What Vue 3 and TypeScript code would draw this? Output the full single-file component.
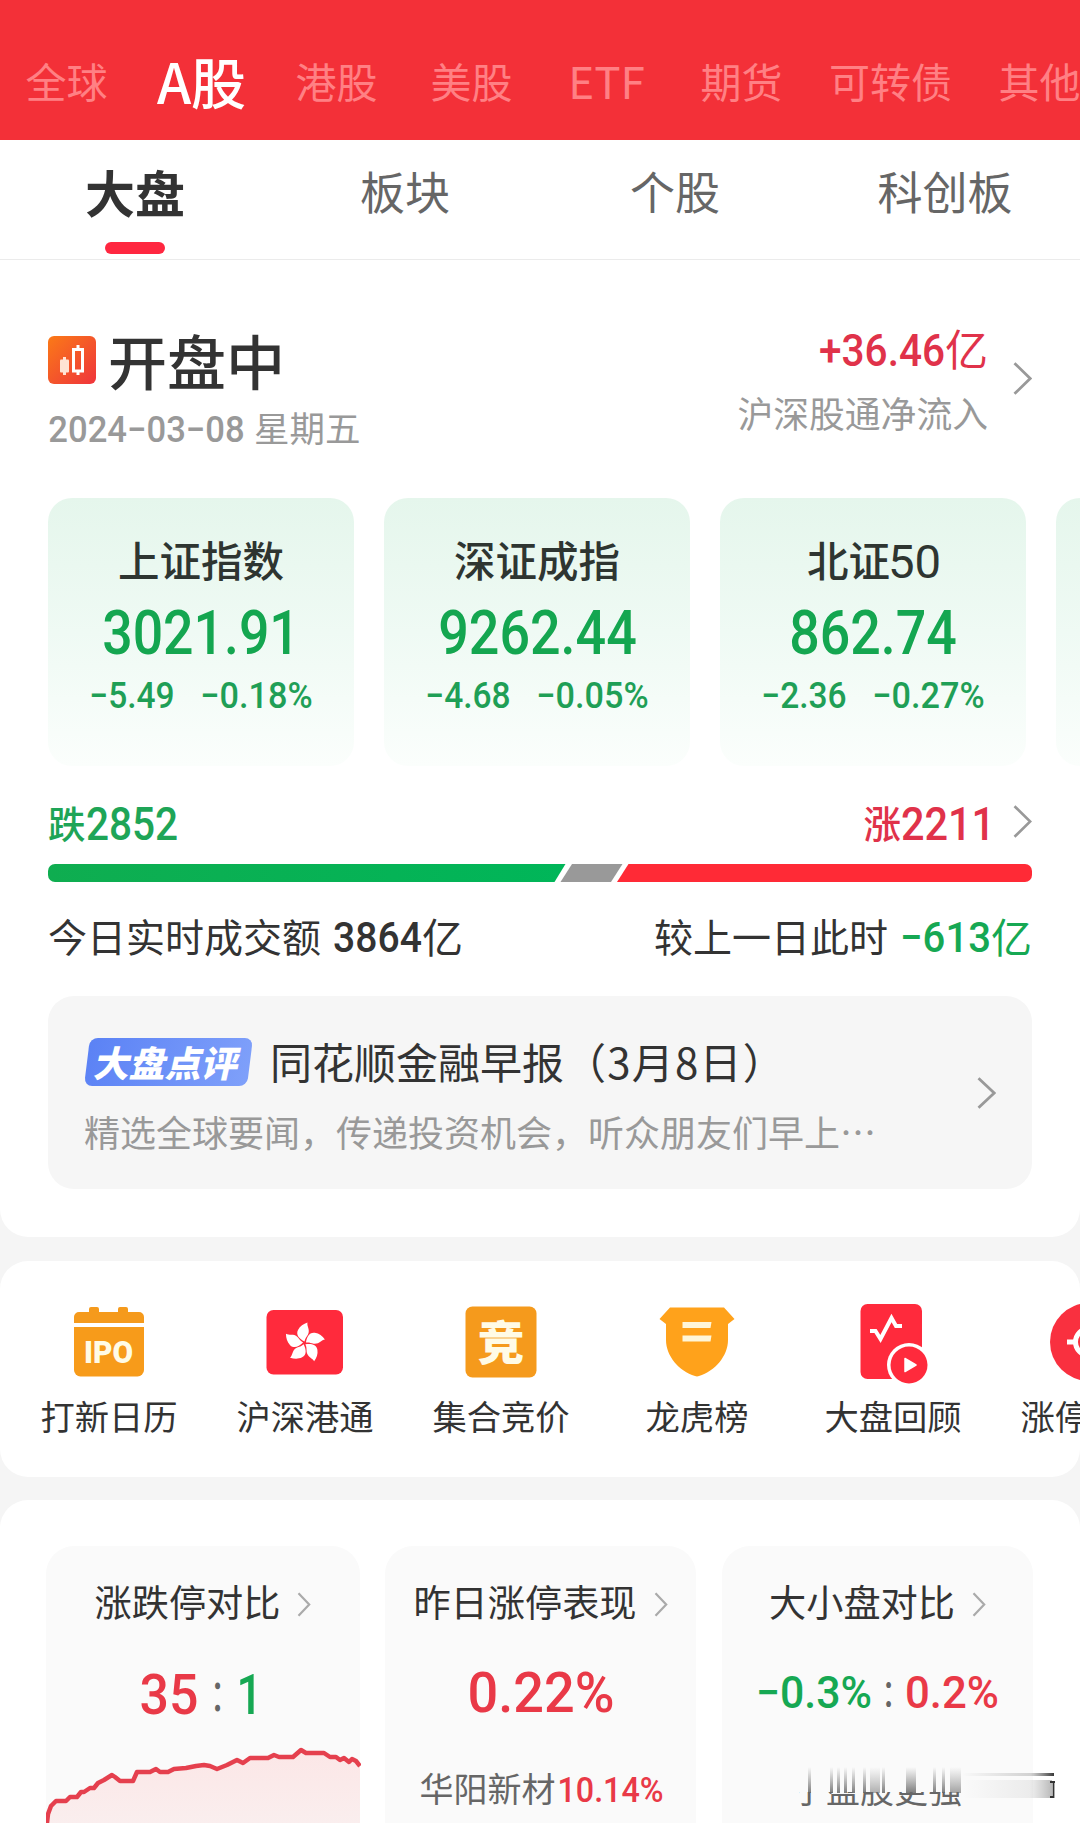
<script setup lang="ts">
import { h, type FunctionalComponent } from 'vue'

interface NumProps {
  t: string
  w: number
  cap: number
  weight?: number
}

/** Condensed figures: a text run fitted to a given width and cap height. */
const Num: FunctionalComponent<NumProps> = (p) => {
  const size = p.cap / 0.711
  const bearing = size * 0.045
  return h(
    'svg',
    {
      width: p.w,
      height: p.cap,
      viewBox: `0 0 ${p.w} ${p.cap}`,
      style: { overflow: 'visible', display: 'block', flex: 'none' },
    },
    [
      h(
        'text',
        {
          x: -bearing,
          y: p.cap,
          textLength: p.w + bearing * 2,
          lengthAdjust: 'spacingAndGlyphs',
          fill: 'currentColor',
          'font-family': 'Roboto, "Liberation Sans", sans-serif',
          'font-size': size,
          'font-weight': p.weight ?? 500,
        },
        p.t,
      ),
    ],
  )
}
Num.props = ['t', 'w', 'cap', 'weight']

const Chevron: FunctionalComponent<{ w: number; hgt: number; sw: number }> = (p) =>
  h('svg', { width: p.w, height: p.hgt, style: { display: 'block', flex: 'none' } }, [
    h('path', {
      d: `M1.5 1.2 L${p.w - 1.8} ${p.hgt / 2} L1.5 ${p.hgt - 1.2}`,
      fill: 'none',
      stroke: 'currentColor',
      'stroke-width': p.sw,
    }),
  ])
Chevron.props = ['w', 'hgt', 'sw']

const markets = ['全球', 'A股', '港股', '美股', 'ETF', '期货', '可转债', '其他']
const boards = ['大盘', '板块', '个股', '科创板']

const indexes = [
  { name: '上证指数', digits: '', value: '3021.91', vw: 192, diff: '−5.49', pct: '−0.18%' },
  { name: '深证成指', digits: '', value: '9262.44', vw: 193, diff: '−4.68', pct: '−0.05%' },
  { name: '北证', digits: '50', value: '862.74', vw: 162, diff: '−2.36', pct: '−0.27%' },
]

const shortcuts = [
  { label: '打新日历', icon: 'ipo' },
  { label: '沪深港通', icon: 'hk' },
  { label: '集合竞价', icon: 'auction' },
  { label: '龙虎榜', icon: 'shield' },
  { label: '大盘回顾', icon: 'review' },
  { label: '涨停聚焦', icon: 'target' },
]

const petals = [0, 72, 144, 216, 288]

const trend =
  '1,277 2,268 5,260 10,255 20,255 24,251 31,251 35,246 38,246 44,242 48,242 52,237 58,234 66,229 69,231 74,235 87,235 91,226 104,226 110,223 114,226 122,226 128,223 140,222 150,220 158,219 164,220 171,223 181,219 191,214 197,217 204,212 222,212 228,209 233,211 247,211 255,204 260,207 278,207 284,211 290,211 294,214 298,212 303,216 306,213 310,215 314,220'
</script>

<template>
  <div class="page">
    <header class="markets">
      <span
        v-for="(m, i) in markets"
        :key="m"
        class="market"
        :class="{ active: i === 1, latin: m === 'ETF', wide: m.length === 3 && i > 4 }"
      >{{ m }}</span>
    </header>

    <nav class="boards">
      <div v-for="(b, i) in boards" :key="b" class="board" :class="{ active: i === 0 }">
        <span>{{ b }}</span>
        <i v-if="i === 0"></i>
      </div>
    </nav>

    <section class="overview">
      <div class="status">
        <div class="status-left">
          <div class="status-title">
            <svg class="kicon" width="48" height="48" viewBox="0 0 48 48">
              <defs>
                <linearGradient id="kg" x1="0" y1="0" x2="1" y2="1">
                  <stop offset="0" stop-color="#fb7a17" />
                  <stop offset="0.5" stop-color="#f4572a" />
                  <stop offset="1" stop-color="#f0343c" />
                </linearGradient>
              </defs>
              <rect width="48" height="48" rx="6" fill="url(#kg)" />
              <g fill="#ffe3d4">
                <rect x="12" y="23.500" width="9" height="13" rx="1" />
                <rect x="15" y="21" width="3" height="18" />
              </g>
              <rect x="25.500" y="13.500" width="9" height="21.500" fill="none" stroke="#fff" stroke-width="3" />
              <rect x="28.500" y="9" width="3" height="5" fill="#fff" />
              <rect x="28.500" y="35" width="3" height="4" fill="#fff" />
            </svg>
            <h1>开盘中</h1>
          </div>
          <div class="date">
            <Num class="date-num" t="2024−03−08" :w="193" :cap="26" :weight="500" />
            <span>星期五</span>
          </div>
        </div>
        <div class="flow">
          <div class="flow-value">
            <Num class="flow-num" t="+36.46" :w="122" :cap="32" />
            <span>亿</span>
          </div>
          <span class="flow-label">沪深股通净流入</span>
        </div>
        <Chevron class="grey-arrow" :w="19" :hgt="33" :sw="2.8" />
      </div>

      <div class="indexes">
        <article v-for="x in indexes" :key="x.value" class="index">
          <div class="index-name">
            <span>{{ x.name }}</span>
            <Num v-if="x.digits" class="index-digits" :t="x.digits" :w="49" :cap="33" :weight="450" />
          </div>
          <Num class="index-value" :t="x.value" :w="x.vw" :cap="44" />
          <div class="index-change">
            <Num :t="x.diff" :w="82" :cap="26" />
            <Num :t="x.pct" :w="109" :cap="26" />
          </div>
        </article>
        <article class="index"></article>
      </div>

      <div class="breadth">
        <div class="down"><span>跌</span><Num class="bn" t="2852" :w="88" :cap="33" /></div>
        <div class="up">
          <span>涨</span><Num class="bn" t="2211" :w="90" :cap="33" />
          <Chevron class="up-arrow" :w="19" :hgt="33" :sw="2.6" />
        </div>
      </div>
      <svg class="bar" width="984" height="18" viewBox="0 0 984 18">
        <defs>
          <linearGradient id="gb" x1="0" x2="1" y1="0" y2="0">
            <stop offset="0" stop-color="#0fad50" />
            <stop offset="1" stop-color="#00b659" />
          </linearGradient>
        </defs>
        <path d="M7 0 H517.5 L506.5 18 H7 A7 7 0 0 1 0 11 V7 A7 7 0 0 1 7 0Z" fill="url(#gb)" />
        <path d="M524 0 H574.5 L563 18 H512.5Z" fill="#999" />
        <path d="M580.5 0 H977 A7 7 0 0 1 984 7 V11 A7 7 0 0 1 977 18 H569Z" fill="#ff2a36" />
      </svg>
      <div class="turnover">
        <div class="pair">
          <span>今日实时成交额</span>
          <Num class="tn" t="3864" :w="85" :cap="30.5" />
          <em>亿</em>
        </div>
        <div class="pair">
          <span>较上一日此时</span>
          <Num class="tn green" t="−613" :w="87" :cap="30.5" />
          <em class="green">亿</em>
        </div>
      </div>

      <div class="comment">
        <div class="comment-body">
          <div class="comment-head">
            <span class="tag"><b>大盘点评</b></span>
            <span class="comment-title">同花顺金融早报<span class="day">（3月8日）</span></span>
          </div>
          <p>精选全球要闻，传递投资机会，听众朋友们早上…</p>
        </div>
        <Chevron class="comment-arrow" :w="19" :hgt="32" :sw="2.8" />
      </div>
    </section>

    <section class="shortcuts">
      <div v-for="s in shortcuts" :key="s.label" class="shortcut">
        <svg width="84" height="84" viewBox="0 0 84 84">
          <g v-if="s.icon === 'ipo'">
            <path d="M7 23 V17 a5 5 0 0 1 5-5 H22 V9 a2 2 0 0 1 2-2 h6 a2 2 0 0 1 2 2 V12 H51 V9 a2 2 0 0 1 2-2 h6 a2 2 0 0 1 2 2 V12 H72 a5 5 0 0 1 5 5 V23Z" fill="#f59a1c" />
            <path d="M7 27 H77 V70 a6.5 6.5 0 0 1 -6.5 6.5 H13.5 A6.5 6.5 0 0 1 7 70Z" fill="#f79b1a" />
            <text x="17" y="63" textLength="49" lengthAdjust="spacingAndGlyphs" font-family="Roboto, sans-serif" font-weight="900" font-size="32" fill="#fffbe6">IPO</text>
          </g>
          <g v-else-if="s.icon === 'hk'">
            <rect x="3.500" y="10" width="76.500" height="64.500" rx="7" fill="#ff2a3c" />
            <g transform="translate(41.500 43)">
              <path v-for="a in petals" :key="a" :transform="`rotate(${a})`" d="M0 -1.5 C-5 -4 -9 -8 -6.5 -13 C-4.5 -17 -1 -19 3 -20.500 C2 -17 6 -13.500 3.500 -8.500 C2 -6 .5 -4.500 0 -1.5Z" fill="#fff" />
            </g>
          </g>
          <g v-else-if="s.icon === 'auction'">
            <rect x="6.500" y="6.500" width="71" height="71" rx="7" fill="#f59a1c" />
            <text x="42" y="60" text-anchor="middle" font-family="Noto Sans CJK SC, sans-serif" font-weight="900" font-size="47" fill="#fffbe6">竞</text>
          </g>
          <g v-else-if="s.icon === 'shield'">
            <path d="M15 7.5 H69 L79.500 19 L73 24 V40 C73 56 60 71 44 76 Q42 76.8 40 76 C24 71 11 56 11 40 V24 L4.500 19Z" fill="#ffa21b" />
            <path d="M27.500 22 H56.500 L55.500 28 H27.500Z M27.500 35.500 H56.500 L55.500 41.500 H27.500Z" fill="#fff6d8" />
          </g>
          <g v-else-if="s.icon === 'review'">
            <rect x="9.500" y="4" width="61.500" height="75" rx="7" fill="#ff2a3c" />
            <circle cx="58" cy="65" r="22" fill="#fff" />
            <circle cx="58" cy="65" r="18.500" fill="#ff2a3c" />
            <path d="M54 58.500 L65 65 L54 71.500Z" fill="#fff" stroke="#fff" stroke-width="1.500" stroke-linejoin="round" />
            <path d="M19 31 H24.500 L29.500 39 L40.500 18 L45 26 H51" fill="none" stroke="#fff" stroke-width="4" />
          </g>
          <g v-else>
            <circle cx="42" cy="42" r="39" fill="#f9303f" />
            <circle cx="42" cy="42" r="13.500" fill="none" stroke="#fff" stroke-width="5" />
            <path d="M20 42 H30 M54 42 H64 M42 20 V30 M42 54 V64" stroke="#fff" stroke-width="5" />
          </g>
        </svg>
        <span>{{ s.label }}</span>
      </div>
    </section>

    <section class="stats">
      <article class="stat lead">
        <div class="stat-head"><span>涨跌停对比</span><Chevron class="sa" :w="14" :hgt="25" :sw="2.2" /></div>
        <div class="stat-value first">
          <Num class="red" t="35" :w="54" :cap="39" />
          <Num class="colon" t=":" :w="5" :cap="37" />
          <Num class="green" t="1" :w="21" :cap="39" />
        </div>
        <svg class="trend" width="315" height="277" viewBox="0 0 315 277">
          <defs>
            <linearGradient id="tg" x1="0" y1="200" x2="0" y2="277" gradientUnits="userSpaceOnUse">
              <stop offset="0" stop-color="#fce6e6" />
              <stop offset="1" stop-color="#faeeee" />
            </linearGradient>
          </defs>
          <polygon :points="`${trend} 314,277`" fill="url(#tg)" />
          <polyline :points="trend" fill="none" stroke="#e5404e" stroke-width="4.500" stroke-linejoin="round" />
        </svg>
      </article>
      <article class="stat">
        <div class="stat-head"><span>昨日涨停表现</span><Chevron class="sa" :w="14" :hgt="25" :sw="2.2" /></div>
        <div class="stat-value"><Num class="red" t="0.22%" :w="142" :cap="40" /></div>
        <div class="stat-foot">
          <span>华阳新材</span><Num class="red foot-num" t="10.14%" :w="103" :cap="24.5" />
        </div>
      </article>
      <article class="stat">
        <div class="stat-head"><span>大小盘对比</span><Chevron class="sa" :w="14" :hgt="25" :sw="2.2" /></div>
        <div class="stat-value pair-value">
          <Num class="green" t="−0.3%" :w="112" :cap="32" />
          <Num class="colon" t=":" :w="5" :cap="33" />
          <Num class="red" t="0.2%" :w="90" :cap="32" />
        </div>
        <div class="ticker">
          <svg width="311" height="60" viewBox="0 0 311 60">
            <defs>
              <linearGradient id="sv" x1="0" y1="0" x2="0" y2="1">
                <stop offset="0" stop-color="#777" stop-opacity="0" />
                <stop offset="1" stop-color="#666" stop-opacity="0.85" />
              </linearGradient>
              <linearGradient id="sh" x1="0" y1="0" x2="1" y2="0">
                <stop offset="0" stop-color="#555" stop-opacity="0" />
                <stop offset="0.75" stop-color="#555" stop-opacity="0.25" />
                <stop offset="1" stop-color="#222" stop-opacity="0.9" />
              </linearGradient>
              <clipPath id="lower">
                <path d="M77 35 H92 V60 H77Z M104 35 H260 V60 H104Z" />
              </clipPath>
            </defs>
            <text x="70" y="46" font-family="Noto Sans CJK SC, sans-serif" font-size="34" fill="#666" clip-path="url(#lower)">小盘股更强</text>
            <g fill="url(#sv)">
              <rect x="86" y="10" width="3" height="26" />
              <rect x="108" y="10" width="3" height="26" />
              <rect x="115" y="10" width="3" height="26" />
              <rect x="122" y="10" width="3" height="26" />
              <rect x="130" y="10" width="3" height="26" />
              <rect x="141" y="10" width="3" height="26" />
              <rect x="148" y="10" width="10" height="26" opacity="0.6" />
              <rect x="160" y="10" width="3" height="26" />
              <rect x="184" y="10" width="10" height="26" />
              <rect x="211" y="10" width="3" height="26" />
              <rect x="220" y="10" width="3" height="26" />
              <rect x="228" y="10" width="11" height="26" opacity="0.7" />
            </g>
            <rect x="240" y="16" width="92" height="3" fill="url(#sh)" />
            <rect x="240" y="23" width="90" height="18" fill="url(#sh)" opacity="0.35" />
            <path d="M328 25 H333 M331.500 25 V40 H328" fill="none" stroke="#333" stroke-width="1.800" />
          </svg>
        </div>
      </article>
    </section>
  </div>
</template>

<style>
body {
  background: #f5f5f5;
}
</style>

<style scoped>
.page {
  width: 1080px;
  height: 1823px;
  overflow: hidden;
  background: #f5f5f5;
  color: #333;
  font-family: "Noto Sans CJK SC", sans-serif;
  line-height: 1;
  white-space: nowrap;
}
.red { color: #e93947; }
.green { color: #16a853; }

.markets {
  box-sizing: border-box;
  display: flex;
  align-items: center;
  width: 1108px;
  height: 140px;
  margin-left: -1px;
  padding-top: 20px;
  background: #f33038;
  color: #ff8084;
  font-size: 41px;
  font-weight: 400;
}
.market {
  flex: none;
  width: 135px;
  text-align: center;
}
.market.wide { width: 163px; }
.market.latin { font-size: 44px; }
.market.active {
  color: #fff;
  font-size: 55px;
  font-weight: 500;
}

.boards {
  display: flex;
  height: 119px;
  background: #fff;
  border-bottom: 1px solid #ebebeb;
}
.board {
  display: flex;
  flex-direction: column;
  align-items: center;
  width: 270px;
  font-size: 45px;
  line-height: 102px;
  color: #666;
}
.board.active {
  color: #333;
  font-size: 50px;
  font-weight: 700;
}
.board i {
  width: 60px;
  height: 12px;
  border-radius: 6px;
  background: #ff2740;
}

.overview {
  box-sizing: border-box;
  height: 977px;
  padding: 65px 48px 0;
  background: #fff;
  border-radius: 0 0 28px 28px;
}
.status {
  display: flex;
  height: 173px;
}
.status-left { flex: 1; }
.status-title {
  display: flex;
  align-items: center;
  height: 60px;
  margin-top: 4px;
}
.kicon { margin-top: 2px; }
.status-title h1 {
  margin: 0 0 0 12px;
  font-size: 59px;
  font-weight: 500;
}
.date {
  display: flex;
  align-items: center;
  margin-top: 20px;
  color: #999;
  font-size: 35.5px;
}
.date-num { margin: 5px 11px 0 2px; }
.flow {
  display: flex;
  flex-direction: column;
  align-items: flex-end;
  padding-right: 25px;
}
.flow-value {
  display: flex;
  align-items: center;
  margin-top: 1px;
  color: #e0324a;
  font-size: 43px;
}
.flow-num { margin: 5px 2px 0 0; }
.flow-label {
  margin-top: 26px;
  color: #999;
  font-size: 35.8px;
}
.grey-arrow { margin-top: 37px; color: #999; }

.indexes {
  display: flex;
  gap: 30px;
  width: 1032px;
  overflow: hidden;
}
.index {
  box-sizing: border-box;
  flex: none;
  display: flex;
  flex-direction: column;
  align-items: center;
  width: 306px;
  height: 268px;
  padding-top: 41px;
  border-radius: 24px;
  background: linear-gradient(#e5f6ec, #effaf4 50%, #fbfefc);
}
.index-name {
  display: flex;
  align-items: center;
  height: 42px;
  font-size: 41.5px;
  font-weight: 500;
  color: #2e3531;
}
.index-digits { margin-top: 3px; }
.index-value { margin-top: 29px; color: #14a650; }
.index-change {
  display: flex;
  gap: 29px;
  margin-top: 28px;
  color: #1f9f56;
}

.breadth {
  display: flex;
  justify-content: space-between;
  height: 38px;
  margin-top: 37px;
  font-size: 37.5px;
  font-weight: 500;
}
.down, .up { display: flex; align-items: center; }
.down { color: #1ea557; }
.up { color: #e0324a; }
.bn { margin: 2px 0 0 2px; }
.up-arrow { margin: -2px 0 0 20px; color: #999; }
.bar { display: block; margin-top: 23px; }
.turnover {
  display: flex;
  justify-content: space-between;
  margin-top: 34px;
  font-size: 39px;
}
.pair { display: flex; align-items: center; height: 39px; }
.tn { margin: 1px 2px 0 14px; }
.pair em { font-style: normal; font-size: 41px; }

.comment {
  box-sizing: border-box;
  display: flex;
  align-items: center;
  height: 193px;
  margin-top: 41px;
  padding: 0 36px;
  border-radius: 26px;
  background: #f6f6f6;
}
.comment-body { flex: 1; }
.comment-head { display: flex; align-items: center; height: 48px; margin-top: 2px; }
.tag {
  display: flex;
  align-items: center;
  justify-content: center;
  width: 163px;
  height: 48px;
  margin: 0 20px 0 3px;
  border-radius: 8px;
  background: linear-gradient(100deg, #5b82f5, #7fa0fa);
  color: #fff;
  font-size: 36px;
  transform: skewX(-7deg);
}
.tag b { font-weight: 900; transform: skewX(-6deg); margin-top: -3px; }
.comment-title { font-size: 42px; margin-top: -2px; }
.day { letter-spacing: 1.2px; }
.comment p {
  margin: 27px 0 0;
  color: #999;
  font-size: 36px;
}
.comment-arrow { color: #999; }

.shortcuts {
  box-sizing: border-box;
  display: flex;
  height: 216px;
  margin-top: 24px;
  padding-left: 11px;
  border-radius: 28px;
  background: #fff;
  overflow: hidden;
}
.shortcut {
  flex: none;
  display: flex;
  flex-direction: column;
  align-items: center;
  width: 196px;
  padding-top: 39px;
  font-size: 34.3px;
}
.shortcut span { margin-top: 14px; }

.stats {
  box-sizing: border-box;
  display: flex;
  gap: 26px;
  height: 323px;
  margin-top: 23px;
  padding: 46px 46px 0;
  border-radius: 28px 28px 0 0;
  background: #fff;
}
.stat {
  display: grid;
  grid-template: 110px 74px 93px / 100%;
  flex: none;
  width: 311px;
  border-radius: 28px 28px 0 0;
  background: #fafafa;
}
.stat.lead { width: 314px; margin-right: -1px; }
.stat-head {
  display: flex;
  justify-content: center;
  align-items: center;
  grid-area: 1 / 1;
  height: 112px;
  font-size: 37.2px;
}
.sa { margin-left: 17px; margin-top: 4px; color: #aaa; }
.stat-value {
  display: flex;
  justify-content: center;
  align-items: center;
  grid-area: 2 / 1;
  height: 72px;
}
.stat-value.first { gap: 19px; height: 76px; margin-left: -4px; }
.pair-value { gap: 16px; }
.colon { color: #666; margin-top: -4px; }
.trend { display: block; grid-area: 1 / 1; }
.stat-foot {
  display: flex;
  align-items: center;
  justify-content: center;
  grid-area: 3 / 1;
  height: 116px;
  color: #666;
  font-size: 34px;
}
.foot-num { margin: 2px 0 0 3px; }
.ticker {
  display: flex;
  grid-area: 3 / 1;
  padding-top: 27px;
}
.ticker svg { overflow: visible; }
</style>
